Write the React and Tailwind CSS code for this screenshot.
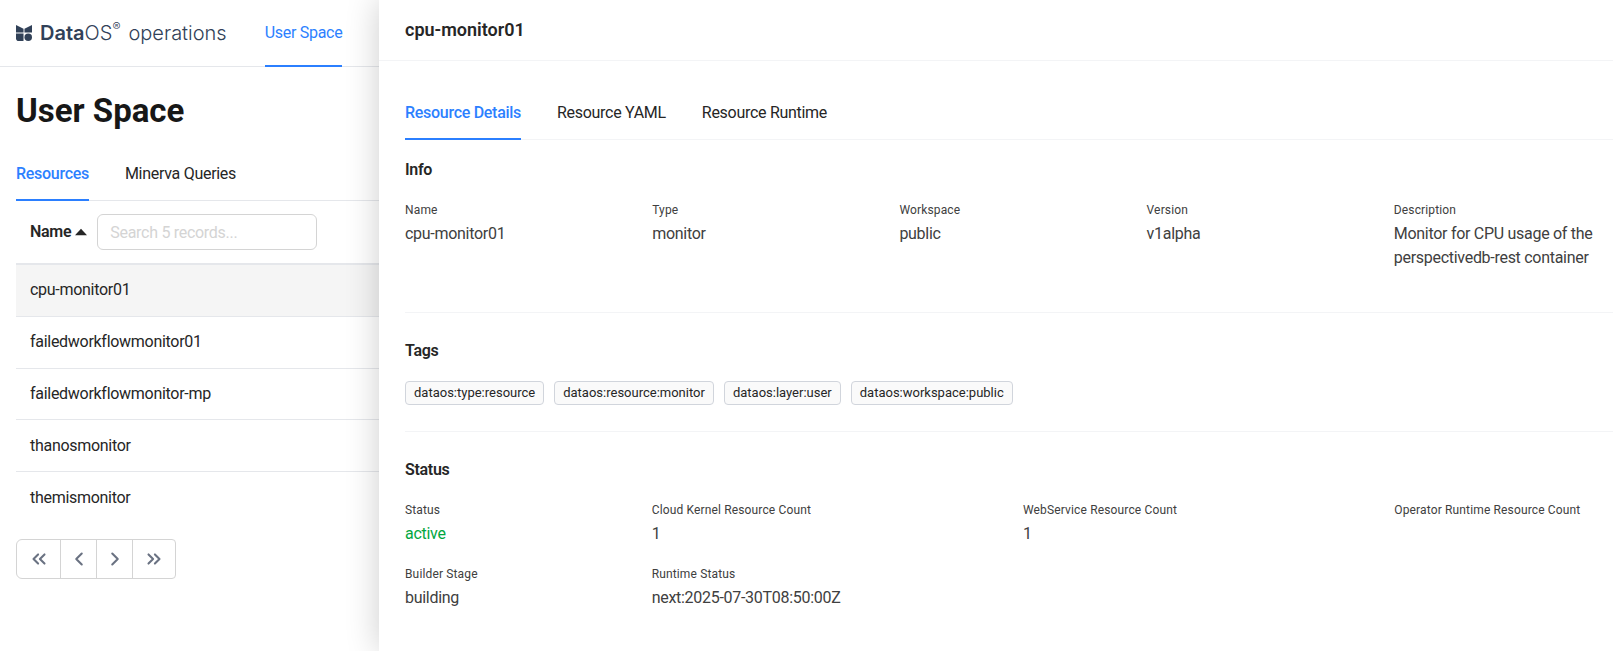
import React from 'react';
import { ChevronLeft, ChevronRight, ChevronsLeft, ChevronsRight } from 'lucide-react';

const rows = ['cpu-monitor01', 'failedworkflowmonitor01', 'failedworkflowmonitor-mp', 'thanosmonitor', 'themismonitor'];
const tags = ['dataos:type:resource', 'dataos:resource:monitor', 'dataos:layer:user', 'dataos:workspace:public'];
const info = [
  ['Name', 'cpu-monitor01'],
  ['Type', 'monitor'],
  ['Workspace', 'public'],
  ['Version', 'v1alpha'],
  ['Description', 'Monitor for CPU usage of the perspectivedb-rest container'],
];

const Logo = () => (
  <svg viewBox="0 0 17 17" className="w-4 h-4 shrink-0 text-slate-700" fill="currentColor">
    <path d="M0 0l8 4v4H0zM17 0L9 4v4h8z" />
    <path d="M0 9h8v8H3a3 3 0 0 1-3-3z" />
    <circle cx="13" cy="13" r="4" />
  </svg>
);

const Field = ({ label, value, className = 'text-neutral-700' }) => (
  <div>
    <div className="text-xs leading-4 mb-1 tracking-[0.012em] text-neutral-700">{label}</div>
    {value && <div className={`text-base leading-6 ${className}`}>{value}</div>}
  </div>
);

const Tab = ({ active, children }) => (
  <div className={active ? 'relative font-medium text-blue-500' : 'text-neutral-800'}>
    {children}
    {active && <span className="absolute inset-x-0 -bottom-3.5 h-0.5 translate-y-px bg-blue-500" />}
  </div>
);

export default function App() {
  return (
    <div className="relative h-screen overflow-hidden bg-white font-['Roboto',sans-serif] tracking-[-0.018em] text-neutral-800">
      {/* Page behind the drawer */}
      <header className="box-content h-16.5 border-b border-gray-200 flex items-center pl-4">
        <Logo />
        <div className="ml-2 flex items-start text-xl tracking-normal font-['Inter',sans-serif] text-slate-700">
          <span className="font-semibold">Data</span>
          <span className="font-light">OS</span>
          <span className="text-xs font-light">®</span>
          <span className="ml-2 font-light">operations</span>
        </div>
        <div className="relative ml-9.5 h-full flex items-center text-base text-blue-500">
          User Space
          <span className="absolute inset-x-0 -bottom-px h-0.5 bg-blue-500" />
        </div>
      </header>

      <main className="pl-4">
        <h1 className="pt-6.5 text-[33px] leading-9 font-bold tracking-normal text-neutral-900">User Space</h1>

        <div className="mt-8.25 pb-3.5 border-b border-gray-200 flex gap-9 text-base leading-6">
          <Tab active>Resources</Tab>
          <Tab>Minerva Queries</Tab>
        </div>

        <div className="h-16 border-b-2 border-gray-200 flex items-center pl-3.5">
          <span className="text-base font-semibold">Name</span>
          <svg viewBox="0 0 11 6" className="ml-1 w-3 h-2 text-neutral-800" fill="currentColor">
            <path d="M5.5 0L11 6H0z" />
          </svg>
          <input
            placeholder="Search 5 records..."
            className="ml-2.5 w-55 h-9 px-3 text-base border border-neutral-300 rounded-md placeholder:text-neutral-300"
          />
        </div>

        <div className="h-64.5 flex flex-col">
          {rows.map((row, i) => (
            <div key={row} className={`flex-1 flex items-center pl-3.5 text-base border-b border-gray-200 ${i === 0 ? 'bg-neutral-100' : ''} ${i === 4 ? 'border-b-0' : ''}`}>
              {row}
            </div>
          ))}
        </div>

        <div className="mt-4 flex w-40 h-10 border border-neutral-300 rounded-l-md rounded-r-sm text-gray-500">
          <button className="w-11 flex items-center justify-center border-r border-neutral-300"><ChevronsLeft size={22} strokeWidth={2.25} /></button>
          <button className="w-9 flex items-center justify-center border-r border-neutral-300"><ChevronLeft size={22} strokeWidth={2.25} /></button>
          <button className="w-9 flex items-center justify-center border-r border-neutral-300"><ChevronRight size={22} strokeWidth={2.25} /></button>
          <button className="flex-1 flex items-center justify-center"><ChevronsRight size={22} strokeWidth={2.25} /></button>
        </div>
      </main>

      {/* Drawer */}
      <aside className="absolute inset-y-0 right-0 left-[379px] bg-white shadow-[0_0_32px_rgba(0,0,0,0.2)]">
        <div className="box-content h-15 border-b border-gray-100 flex items-center pl-6.5 text-lg tracking-normal font-semibold text-neutral-800">
          cpu-monitor01
        </div>

        <div className="pl-6.5">
          <div className="pt-10 pb-3.5 border-b border-gray-100 flex gap-9 text-base leading-6">
            <Tab active>Resource Details</Tab>
            <Tab>Resource YAML</Tab>
            <Tab>Resource Runtime</Tab>
          </div>

          <section className="pb-10.5 border-b border-gray-100">
            <h3 className="pt-5 text-base leading-5 font-semibold">Info</h3>
            <div className="mt-5.5 grid grid-cols-5 gap-x-7">
              {info.map(([label, value]) => (
                <Field key={label} label={label} value={value} />
              ))}
            </div>
          </section>

          <section className="pb-6.5 border-b border-gray-100">
            <h3 className="pt-7 text-base leading-5 font-semibold">Tags</h3>
            <div className="mt-5 flex gap-2.5">
              {tags.map((tag) => (
                <span key={tag} className="h-6 px-2 flex items-center text-[13px] tracking-normal bg-neutral-50 border border-gray-300 rounded text-neutral-800">
                  {tag}
                </span>
              ))}
            </div>
          </section>

          <section>
            <h3 className="pt-7 text-base leading-5 font-semibold">Status</h3>
            <div className="mt-5.5 grid grid-cols-[1fr_1.57fr_1.57fr_1fr] gap-x-7 gap-y-5">
              <Field label="Status" value="active" className="text-green-600" />
              <Field label="Cloud Kernel Resource Count" value="1" />
              <Field label="WebService Resource Count" value="1" />
              <Field label="Operator Runtime Resource Count" />
              <Field label="Builder Stage" value="building" />
              <Field label="Runtime Status" value="next:2025-07-30T08:50:00Z" />
            </div>
          </section>
        </div>
      </aside>
    </div>
  );
}
